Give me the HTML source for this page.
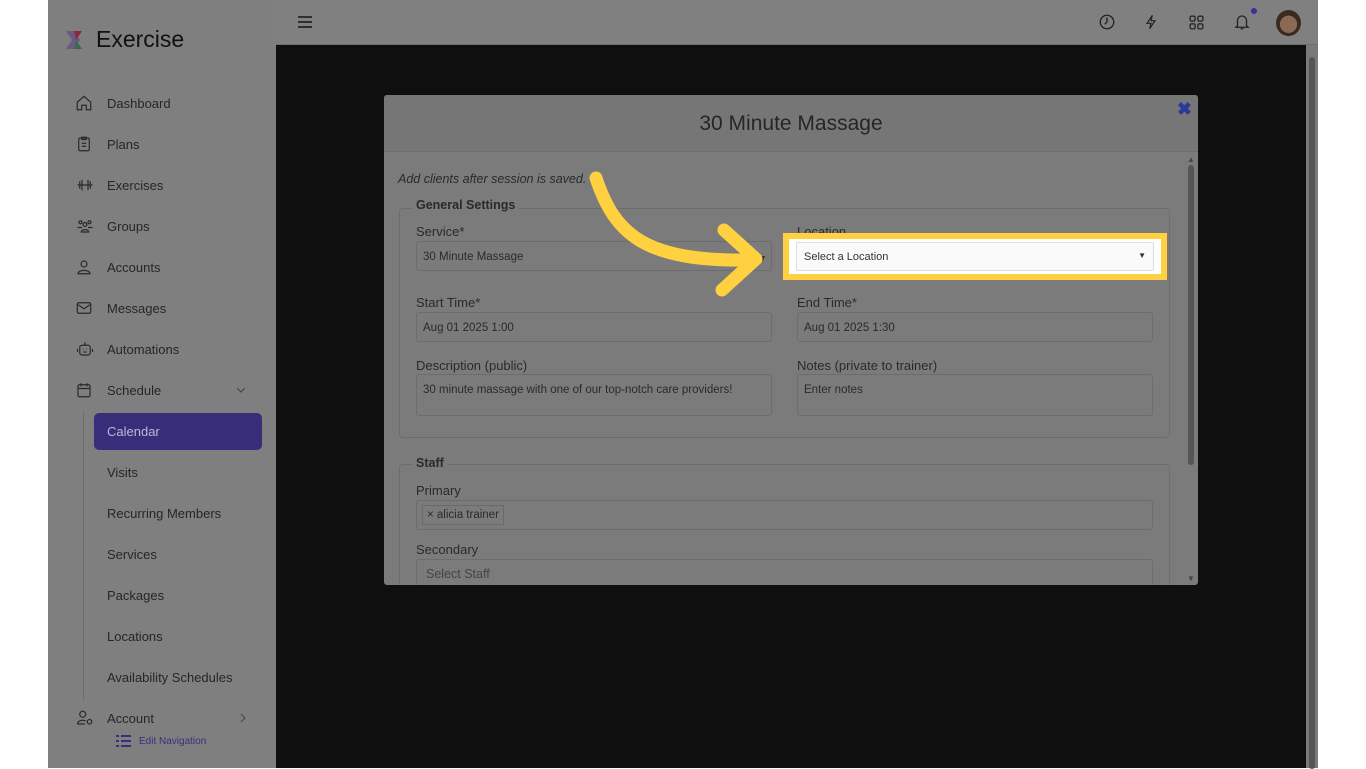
<!DOCTYPE html>
<html><head><meta charset="utf-8"><style>
*{box-sizing:border-box;margin:0;padding:0}
body{width:1366px;height:768px;background:#fff;font-family:"Liberation Sans",sans-serif;position:relative;overflow:hidden}
.side{position:absolute;left:48px;top:0;width:228px;height:768px;background:#7f7f7f}
.logo{position:absolute;left:16px;top:26px;font-size:23px;color:#111;display:flex;align-items:center;gap:8px}
.nav{position:absolute;left:0;width:228px;height:38px;display:flex;align-items:center;font-size:13px;color:#262626}
.nav svg{position:absolute;left:27px}
.nav span{position:absolute;left:59px}
.sub span{left:59px}
.active{position:absolute;left:46px;top:413px;width:168px;height:37px;background:#382d78;border-radius:5px;color:#bdb9d6;font-size:13px;padding:11px 13px}
.vline{position:absolute;left:35px;top:412px;width:1px;height:288px;background:#6c6c6c}
.top{position:absolute;left:276px;top:0;width:1042px;height:45px;background:#808080;border-bottom:1px solid #6f6f6f}
.main{position:absolute;left:276px;top:45px;width:1030px;height:723px;background:#0f0f0f}
.sb{position:absolute;left:1306px;top:45px;width:12px;height:723px;background:#7a7a7a}
.sb div{position:absolute;left:3px;top:12px;width:6px;height:712px;background:#555;border-radius:3px}
.modal{position:absolute;left:384px;top:95px;width:814px;height:490px;background:#7b7b7b;border-radius:3px;overflow:hidden}
.mh{height:57px;background:#767676;border-bottom:1px solid #6d6d6d;text-align:center;font-size:21px;color:#262626;padding-top:17px}
.lbl{position:absolute;font-size:13px;color:#2a2a2a}
.inp{position:absolute;height:30px;border:1px solid #6d6d6d;border-radius:3px;background:#7b7b7b;font-size:11.5px;color:#2a2a2a;padding:9px 6px}
.fs{position:absolute;border:1px solid #6d6d6d;border-radius:4px}
</style></head><body>
<div class="side">
 <div class="logo"><svg width="24" height="24" viewBox="0 0 24 24"><path d="M2 3h8l6 9-6 9H2l6-9z" fill="#6b5a88"/><path d="M10 3h8l-6 9z" fill="#8a2a3a"/><path d="M12 12l6 9h-8z" fill="#3a6a4a"/></svg><span>Exercise</span></div>
 <div class="nav" style="top:84px"><svg width="18" height="18" viewBox="0 0 24 24" fill="none" stroke="#2a2a2a" stroke-width="1.6"><path d="M3 11l9-8 9 8v10h-6v-6H9v6H3z"/></svg><span>Dashboard</span></div>
 <div class="nav" style="top:125px"><svg width="18" height="18" viewBox="0 0 24 24" fill="none" stroke="#2a2a2a" stroke-width="1.6"><rect x="5" y="4" width="14" height="17" rx="2"/><path d="M9 3h6v3H9zM9 11h6M9 15h6"/></svg><span>Plans</span></div>
 <div class="nav" style="top:166px"><svg width="20" height="18" viewBox="0 0 24 24" fill="none" stroke="#2a2a2a" stroke-width="1.6"><path d="M2 12h20M5 7v10M8 5v14M16 5v14M19 7v10"/></svg><span>Exercises</span></div>
 <div class="nav" style="top:207px"><svg width="20" height="18" viewBox="0 0 24 24" fill="none" stroke="#2a2a2a" stroke-width="1.6"><circle cx="6" cy="7" r="2"/><circle cx="18" cy="7" r="2"/><circle cx="12" cy="10" r="2.5"/><path d="M2 14h6M16 14h6M7 20c0-4 10-4 10 0z"/></svg><span>Groups</span></div>
 <div class="nav" style="top:248px"><svg width="18" height="18" viewBox="0 0 24 24" fill="none" stroke="#2a2a2a" stroke-width="1.6"><circle cx="12" cy="8" r="4"/><path d="M4 21c0-6 16-6 16 0z"/></svg><span>Accounts</span></div>
 <div class="nav" style="top:289px"><svg width="18" height="18" viewBox="0 0 24 24" fill="none" stroke="#2a2a2a" stroke-width="1.6"><rect x="3" y="5" width="18" height="14" rx="2"/><path d="M3 7l9 6 9-6"/></svg><span>Messages</span></div>
 <div class="nav" style="top:330px"><svg width="20" height="18" viewBox="0 0 24 24" fill="none" stroke="#2a2a2a" stroke-width="1.6"><rect x="5" y="7" width="14" height="13" rx="3"/><path d="M12 3v4M2 12v4M22 12v4M9 12h1M14 12h1M10 16h4"/></svg><span>Automations</span></div>
 <div class="nav" style="top:371px"><svg width="18" height="18" viewBox="0 0 24 24" fill="none" stroke="#2a2a2a" stroke-width="1.6"><rect x="4" y="5" width="16" height="16" rx="2"/><path d="M4 10h16M8 3v4M16 3v4"/></svg><span>Schedule</span><svg style="left:188px" width="10" height="10" viewBox="0 0 10 10" fill="none" stroke="#444"><path d="M1 3l4 4 4-4"/></svg></div>
 <div class="vline"></div>
 <div class="active">Calendar</div>
 <div class="nav sub" style="top:453px"><span>Visits</span></div>
 <div class="nav sub" style="top:494px"><span>Recurring Members</span></div>
 <div class="nav sub" style="top:535px"><span>Services</span></div>
 <div class="nav sub" style="top:576px"><span>Packages</span></div>
 <div class="nav sub" style="top:617px"><span>Locations</span></div>
 <div class="nav sub" style="top:658px"><span>Availability Schedules</span></div>
 <div class="nav" style="top:699px"><svg width="20" height="18" viewBox="0 0 24 24" fill="none" stroke="#2a2a2a" stroke-width="1.6"><circle cx="9" cy="7" r="4"/><path d="M2 20c0-5 8-6 11-4M2 20h10"/><circle cx="18" cy="17" r="3"/></svg><span>Account</span><svg style="left:190px" width="10" height="10" viewBox="0 0 10 10" fill="none" stroke="#444"><path d="M3 1l4 4-4 4"/></svg></div>
 <div style="position:absolute;left:68px;top:735px;font-size:10px;color:#3a2f7c;display:flex;gap:8px;align-items:center"><svg width="15" height="12" viewBox="0 0 15 12" fill="#3a2f7c"><rect x="0" y="0" width="3" height="2"/><rect x="5" y="0" width="10" height="2"/><rect x="0" y="5" width="3" height="2"/><rect x="5" y="5" width="10" height="2"/><rect x="0" y="10" width="3" height="2"/><rect x="5" y="10" width="10" height="2"/></svg>Edit Navigation</div>
</div>
<div class="top">
 <svg style="position:absolute;left:22px;top:15px" width="14" height="14" viewBox="0 0 14 14" stroke="#222" stroke-width="1.8"><path d="M0 2h14M0 7h14M0 12h14"/></svg>
 <svg style="position:absolute;left:822px;top:13px" width="18" height="18" viewBox="0 0 24 24" fill="none" stroke="#222" stroke-width="1.8"><circle cx="12" cy="12" r="9"/><path d="M12 6v6l-3 3"/></svg>
 <svg style="position:absolute;left:867px;top:12px" width="16" height="20" viewBox="0 0 24 24" fill="none" stroke="#222" stroke-width="1.8"><path d="M14 2L6 14h6l-2 8 8-12h-6z"/></svg>
 <svg style="position:absolute;left:912px;top:14px" width="17" height="17" viewBox="0 0 24 24" fill="none" stroke="#222" stroke-width="1.8"><rect x="3" y="3" width="7" height="7" rx="2"/><rect x="14" y="3" width="7" height="7" rx="2"/><rect x="3" y="14" width="7" height="7" rx="2"/><rect x="14" y="14" width="7" height="7" rx="2"/></svg>
 <svg style="position:absolute;left:957px;top:12px" width="18" height="20" viewBox="0 0 24 24" fill="none" stroke="#222" stroke-width="1.8"><path d="M6 17V10a6 6 0 0112 0v7l2 2H4zM10 21h4"/></svg>
 <div style="position:absolute;left:975px;top:8px;width:6px;height:6px;border-radius:50%;background:#3a2f9c"></div>
 <div style="position:absolute;left:1000px;top:10px;width:25px;height:26px;border-radius:50%;background:radial-gradient(circle at 50% 55%,#8a6a55 0 45%,#3a2a20 46%)"></div>
</div>
<div class="main"></div>
<div class="sb"><div></div></div>
<div class="modal">
 <div class="mh">30 Minute Massage</div>
 <div style="position:absolute;right:6px;top:4px;font-size:18px;color:#2a3a9a;font-weight:bold">✖</div>
 <div class="lbl" style="left:14px;top:77px;font-style:italic;font-size:12.5px">Add clients after session is saved.</div>
 <div class="fs" style="left:15px;top:113px;width:771px;height:230px"></div>
 <div class="lbl" style="left:28px;top:103px;font-weight:bold;background:#7b7b7b;padding:0 4px;font-size:12.5px">General Settings</div>
 <div class="lbl" style="left:32px;top:129px">Service*</div>
 <div class="inp" style="left:32px;top:146px;width:356px">30 Minute Massage<span style="float:right">▾</span></div>
 <div class="lbl" style="left:413px;top:129px">Location</div>
 <div class="lbl" style="left:32px;top:200px">Start Time*</div>
 <div class="inp" style="left:32px;top:217px;width:356px">Aug 01 2025 1:00</div>
 <div class="lbl" style="left:413px;top:200px">End Time*</div>
 <div class="inp" style="left:413px;top:217px;width:356px">Aug 01 2025 1:30</div>
 <div class="lbl" style="left:32px;top:263px">Description (public)</div>
 <div class="inp" style="left:32px;top:279px;width:356px;height:42px">30 minute massage with one of our top-notch care providers!</div>
 <div class="lbl" style="left:413px;top:263px">Notes (private to trainer)</div>
 <div class="inp" style="left:413px;top:279px;width:356px;height:42px">Enter notes</div>
 <div class="fs" style="left:15px;top:369px;width:771px;height:140px"></div>
 <div class="lbl" style="left:28px;top:361px;font-weight:bold;background:#7b7b7b;padding:0 4px;font-size:12.5px">Staff</div>
 <div class="lbl" style="left:32px;top:388px">Primary</div>
 <div class="inp" style="left:32px;top:405px;width:737px;padding:4px 5px"><span style="display:inline-block;border:1px solid #6a6a6a;padding:3px 4px;font-size:11.5px">× alicia trainer</span></div>
 <div class="lbl" style="left:32px;top:447px">Secondary</div>
 <div class="inp" style="left:32px;top:464px;width:737px;font-size:12.5px;padding:7px 9px;color:#444">Select Staff</div>
 <div style="position:absolute;left:804px;top:70px;width:6px;height:300px;background:#555;border-radius:3px"></div>
 <div style="position:absolute;left:803px;top:60px;font-size:8px;color:#444">▲</div>
 <div style="position:absolute;left:803px;top:479px;font-size:8px;color:#444">▼</div>
</div>
<div style="position:absolute;left:783px;top:233px;width:384px;height:47px;border:6px solid #FFD03F;background:#fff"></div>
<div style="position:absolute;left:796px;top:242px;width:358px;height:29px;border:1px solid #ddd;border-radius:2px;background:#fafafa;font-size:11px;color:#333;padding:8px 7px">Select a Location<span style="float:right;font-size:8px">▼</span></div>
<svg style="position:absolute;left:0;top:0" width="1366" height="768"><g fill="none" stroke="#FFD03F" stroke-width="13" stroke-linecap="round" stroke-linejoin="round"><path d="M596 178C615 235 645 262 752 260"/><path d="M724 230L756 259L722 290"/></g></svg>
</body></html>
